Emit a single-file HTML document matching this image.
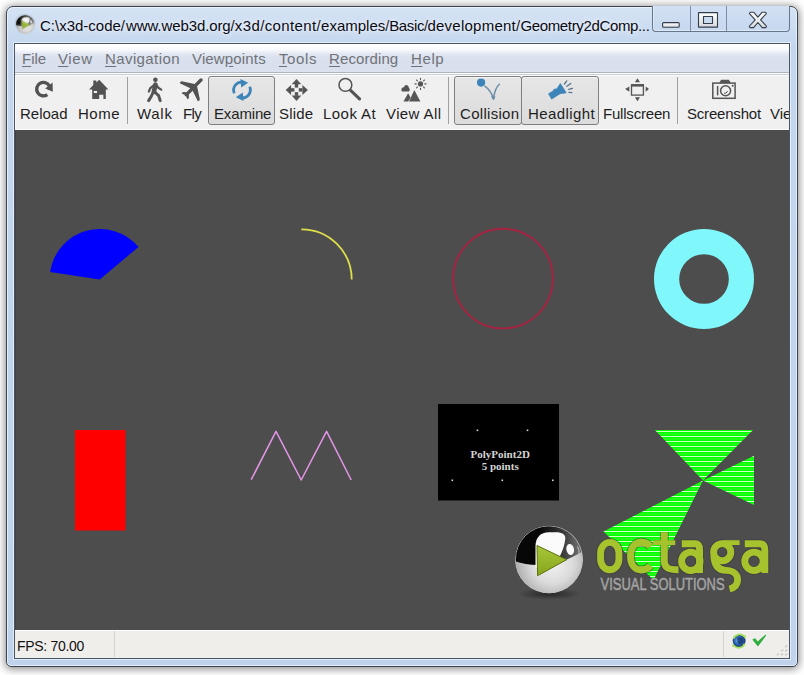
<!DOCTYPE html>
<html><head><meta charset="utf-8">
<style>
html,body{margin:0;padding:0;width:804px;height:675px;overflow:hidden;background:#fff;font-family:"Liberation Sans",sans-serif;}
.abs{position:absolute;}
#win{position:absolute;left:6px;top:6px;width:790px;height:659px;border:1px solid #3c4450;border-radius:7px 7px 5px 5px;
 background:linear-gradient(#d5e3f4 0px,#c8daf0 30px,#c3d6ee 40px,#bfd3ed 100%);
 box-shadow:0 1px 9px 1px rgba(0,0,0,0.48), inset 0 0 0 1px rgba(255,255,255,0.55);}
#client{position:absolute;left:14px;top:43px;width:774px;height:614px;border:1px solid #4a5564;background:#f0f0f0;box-shadow:0 0 0 1px rgba(255,255,255,0.55);}
#title{position:absolute;left:40px;top:17px;font-size:15px;color:#0a0a14;white-space:nowrap;text-shadow:0 0 7px rgba(255,255,255,0.9),0 0 3px rgba(255,255,255,0.6);}
#menubar{position:absolute;left:15px;top:44px;width:774px;height:28px;background:linear-gradient(#ffffff 0px,#f8f9fc 6px,#e6eaf3 9px,#dbe1ee 13px,#d8dfed 24px,#dde2ee 28px);}
#menusep{position:absolute;left:15px;top:72px;width:774px;height:4px;background:linear-gradient(#aeb4bd 0 1px,#fff 1px 2px,#c9ccd1 2px 3px,#fbfbfb 3px 4px);}
.mi{position:absolute;top:50px;font-size:15px;color:#6f7378;white-space:nowrap;}
.mi u{text-decoration:underline;text-underline-offset:2px;}
#toolbar{position:absolute;left:15px;top:76px;width:774px;height:54px;background:#f0f0f0;box-shadow:inset 1px 0 0 #fbfbfb, inset 0 -1px 0 #fbfbfb;}
.tl{position:absolute;top:105px;font-size:15px;color:#1e1e1e;white-space:nowrap;}
.sep{position:absolute;top:77px;width:1px;height:47px;background:#a0a0a0;}
.btn{position:absolute;top:76px;height:47px;border:1px solid #7f7f7f;border-radius:3px;background:linear-gradient(#e6e6e6,#dcdcdc);box-shadow:inset 0 1px 0 #f4f4f4;}
#view{position:absolute;left:15px;top:130px;width:774px;height:500px;background:#4d4d4d;overflow:hidden;box-shadow:inset 1px 0 0 #434343;}
#status{position:absolute;left:15px;top:630px;width:774px;height:28px;background:#f0eeeb;border-top:1px solid #fff;box-sizing:border-box;}
.ssep{position:absolute;top:631px;width:1px;height:26px;background:#d6d2ce;}
#fps{position:absolute;left:17px;top:637.5px;font-size:14px;letter-spacing:-0.3px;color:#111;white-space:nowrap;}
</style></head>
<body>
<div id="win"></div>
<div id="client"></div>
<!-- title bar icon -->
<svg class="abs" style="left:0;top:0" width="50" height="50" viewBox="0 0 50 50">
 <defs><filter id="tib" filterUnits="userSpaceOnUse" x="0" y="0" width="50" height="50"><feGaussianBlur stdDeviation="1"/></filter></defs>
 <g transform="translate(25.3 24.6) scale(0.275)"><use href="#octsphere"/></g>
 <g filter="url(#tib)" opacity="0.6"><g transform="translate(25.3 24.6) scale(0.275)"><use href="#octsphere"/></g></g>
</svg>
<div id="title"><span style="position:absolute;left:0.0px;letter-spacing:0px">C:\x3d-code/</span><span style="position:absolute;left:86.0px;letter-spacing:-0.1px">www.web3d.org/</span><span style="position:absolute;left:194.7px;letter-spacing:0.5px">x3d/</span><span style="position:absolute;left:224.7px;letter-spacing:0.37px">content/</span><span style="position:absolute;left:281.1px;letter-spacing:0px">examples/</span><span style="position:absolute;left:349.2px;letter-spacing:-0.35px">Basic/</span><span style="position:absolute;left:387.4px;letter-spacing:0.25px">development/</span><span style="position:absolute;left:480.4px;letter-spacing:-0.35px">Geometry2dComp...</span></div>
<!-- caption buttons -->
<div class="abs" style="left:652px;top:6px;width:136px;height:25px;border:1px solid #66768c;border-top:none;border-radius:0 0 4px 4px;background:linear-gradient(#d2e0f3,#c6d8ef);box-shadow:inset 0 -1px 0 rgba(255,255,255,0.45), inset 1px 0 0 rgba(255,255,255,0.35);"></div>
<div class="abs" style="left:690px;top:6px;width:1px;height:25px;background:#7d8ca2;"></div>
<div class="abs" style="left:726px;top:6px;width:1px;height:25px;background:#7d8ca2;"></div>
<svg class="abs" style="left:640px;top:0" width="164" height="40" viewBox="640 0 164 40">
 <defs><linearGradient id="glyph" x1="0" y1="0" x2="0" y2="1"><stop offset="0" stop-color="#ffffff"/><stop offset="1" stop-color="#d6d9de"/></linearGradient></defs>
 <rect x="662.6" y="22.6" width="16.6" height="4.6" rx="1" fill="url(#glyph)" stroke="#343c48" stroke-width="1.1"/>
 <path d="M698.5 12.6 H717.5 V27.1 H698.5 Z M703.5 16.5 V23.5 H712.5 V16.5 Z" fill="url(#glyph)" fill-rule="evenodd" stroke="#343c48" stroke-width="1.1" stroke-linejoin="round"/>
 <path d="M750.5 12.2 L753.6 12.2 L757.9 17.2 L762.2 12.2 L765.3 12.2 Q766.6 12.8 766.1 13.9 L760.6 19.8 L766.3 26 Q766.7 27.2 765.4 27.6 L762.2 27.6 L757.9 22.5 L753.6 27.6 L750.4 27.6 Q749.1 27.2 749.5 26 L755.2 19.8 L749.7 13.9 Q749.2 12.8 750.5 12.2 Z" fill="url(#glyph)" stroke="#343c48" stroke-width="1.1" stroke-linejoin="round"/>
</svg>
<div id="menubar"></div>
<div id="menusep"></div>
<div class="mi" style="left:22px"><u>F</u>ile</div>
<div class="mi" style="left:58px;letter-spacing:0.6px"><u>V</u>iew</div>
<div class="mi" style="left:105px;letter-spacing:0.4px"><u>N</u>avigation</div>
<div class="mi" style="left:192px;letter-spacing:0.15px">View<u>p</u>oints</div>
<div class="mi" style="left:279px;letter-spacing:0.6px"><u>T</u>ools</div>
<div class="mi" style="left:329px;letter-spacing:0.1px"><u>R</u>ecording</div>
<div class="mi" style="left:411px;letter-spacing:0.6px"><u>H</u>elp</div>

<div id="toolbar"></div>
<div class="sep" style="left:127px"></div>
<div class="sep" style="left:448px"></div>
<div class="sep" style="left:677px"></div>
<div class="btn" style="left:208px;width:65px"></div>
<div class="btn" style="left:454px;width:66px"></div>
<div class="btn" style="left:521px;width:76px"></div>

<div class="tl" style="left:20px">Reload</div>
<div class="tl" style="left:78px;letter-spacing:0.5px">Home</div>
<div class="tl" style="left:137px;letter-spacing:0.7px">Walk</div>
<div class="tl" style="left:183px;letter-spacing:-0.6px">Fly</div>
<div class="tl" style="left:214px;letter-spacing:-0.15px">Examine</div>
<div class="tl" style="left:279px;letter-spacing:0.2px">Slide</div>
<div class="tl" style="left:323px;letter-spacing:0.45px">Look At</div>
<div class="tl" style="left:386px;letter-spacing:0.4px">View All</div>
<div class="tl" style="left:460px;letter-spacing:0.3px">Collision</div>
<div class="tl" style="left:528px;letter-spacing:0.4px">Headlight</div>
<div class="tl" style="left:603px;letter-spacing:-0.2px">Fullscreen</div>
<div class="tl" style="left:687px;letter-spacing:-0.2px">Screenshot</div>
<div class="abs" style="left:15px;top:74px;width:774px;height:56px;overflow:hidden;pointer-events:none">
 <div class="tl" style="left:755px;top:31px">Viewpoints</div>
</div>

<svg class="abs" style="left:0;top:0" width="804" height="135" viewBox="0 0 804 135">
 <g fill="#555" stroke="none">
  <!-- Reload -->
  <path d="M47.3 94.7 A6.75 6.75 0 1 1 49.3 85.8" fill="none" stroke="#525252" stroke-width="3.4"/>
  <path d="M45.2 88.4 L52.6 82.4 L52.8 91.8 Z" fill="#525252"/>
  <!-- Home -->
  <path d="M99.2 79.8 L108.4 89.6 L105.8 89.6 L105.8 99.1 L103.4 99.1 L103.4 94.8 L99.2 94.8 L99.2 99.1 L92.2 99.1 L92.2 89.6 L89 89.6 L93.3 85 L93.3 80.4 L96.3 80.4 L96.3 82.5 Z" fill="#525252"/>
  <rect x="93.8" y="91" width="3.2" height="2" fill="#f4f4f4"/>
  <!-- Walk -->
  <g fill="none" stroke="#545454" stroke-linecap="round" stroke-linejoin="round">
   <circle cx="155.4" cy="79.8" r="2.3" fill="#545454" stroke="none"/>
   <path d="M155.4 84.6 L153.9 91.8" stroke-width="4.6"/>
   <path d="M154 85.2 L150.3 88.2 L148.8 91.5" stroke-width="2.2"/>
   <path d="M156.5 85.2 L158.6 88 L161.3 89.6" stroke-width="2.2"/>
   <path d="M153.2 92 L151.2 96.5 L148.6 100.6" stroke-width="3"/>
   <path d="M154.8 92 L158.6 95.6 L160.2 100.6" stroke-width="3"/>
  </g>
  <!-- Fly -->
  <path transform="translate(193.6 87.4) rotate(-45)" d="M12.2 0 C12.2 -1.1 11.4 -1.7 10.4 -1.7 L3.2 -1.7 L-4 -12.8 C-4.6 -13.4 -6.2 -13.4 -6.8 -12.6 L-3 -1.7 L-8.4 -1.7 L-10.8 -4.2 L-12.8 -4.2 L-11.6 -1.2 L-12.2 0 L-11.6 1.2 L-12.8 4.2 L-10.8 4.2 L-8.4 1.7 L-3 1.7 L-6.8 12.6 C-6.2 13.4 -4.6 13.4 -4 12.8 L3.2 1.7 L10.4 1.7 C11.4 1.7 12.2 1.1 12.2 0 Z" fill="#525252"/>
  <!-- Examine refresh -->
  <g fill="#3d84b8" stroke="none">
   <path d="M234.3 93.2 A8 8 0 0 1 243.5 82.3" fill="none" stroke="#3d84b8" stroke-width="2.8"/>
   <path d="M240.4 79 L248.2 82.8 L241.2 87.6 Z"/>
   <path d="M249.7 86.8 A8 8 0 0 1 240.5 97.7" fill="none" stroke="#3d84b8" stroke-width="2.8"/>
   <path d="M243.6 101 L235.8 97.2 L242.8 92.4 Z"/>
  </g>
  <!-- Slide move -->
  <g fill="#555">
   <path d="M296.5 78.9 L301.3 84.3 L291.7 84.3 Z"/>
   <path d="M296.5 100.9 L301.3 95.6 L291.7 95.6 Z"/>
   <path d="M285.7 89.9 L291.1 85 L291.1 94.9 Z"/>
   <path d="M307.9 89.9 L302.4 85 L302.4 94.9 Z"/>
   <rect x="294.8" y="84" width="3.4" height="3.6"/>
   <rect x="294.8" y="92.2" width="3.4" height="3.6"/>
   <rect x="290.8" y="88.2" width="3.6" height="3.4"/>
   <rect x="298.8" y="88.2" width="3.6" height="3.4"/>
  </g>
  <!-- Look At -->
  <circle cx="345.4" cy="84.9" r="6.4" fill="none" stroke="#555" stroke-width="1.5"/>
  <path d="M350.6 90.4 L359.5 98.8" fill="none" stroke="#555" stroke-width="3.2" stroke-linecap="round"/>
  <!-- View All -->
  <g fill="#555">
   <circle cx="420.5" cy="83.9" r="2.6"/>
   <g stroke="#555" stroke-width="1.1" stroke-linecap="round">
    <path d="M420.5 78.4 L420.5 79.6 M420.5 88.2 L420.5 89.4 M415 83.9 L416.2 83.9 M424.8 83.9 L426 83.9 M416.6 80 L417.4 80.8 M423.6 87 L424.4 87.8 M424.4 80 L423.6 80.8 M417.4 87 L416.6 87.8"/>
   </g>
   <path d="M401.4 90.2 C401.2 88 402.6 87 404 87.2 C404.4 85.4 405.8 84.8 407 85.2 C408.5 85.6 409 87 408.8 88 C409.8 88.4 410 89.6 409.6 90.6 C409.4 91.4 408.8 91.6 408 91.6 L403 91.6 C402 91.6 401.4 91 401.4 90.2 Z"/>
   <path d="M403.5 101.5 L408.1 93.2 L410.6 97.5 L408.2 101.5 Z"/>
   <path d="M409 101.5 L414.3 89.9 L420.4 101.5 Z"/>
  </g>
  <!-- Collision -->
  <circle cx="481.1" cy="82.6" r="4.1" fill="#3d84b8"/>
  <path d="M484.5 85.8 C488.5 88.5 492 93 493.5 99.2 C494.2 92 496 87 499.8 83.7" fill="none" stroke="#6f8ea6" stroke-width="1.5"/>
  <path d="M491.6 96.6 L493.6 99.6 L494.8 96.2" fill="none" stroke="#5c86a6" stroke-width="1"/>
  <!-- Headlight -->
  <g transform="translate(549.8 96.6) rotate(-32)" fill="#3d84b8">
   <path d="M0 -3.3 L6 -3.3 L6.8 -4.1 L8.8 -4.1 L9.5 -3.3 L10.2 -3.3 L15.8 -5.8 L16.2 -5 L16.2 5 L15.8 5.8 L10.2 3.3 L0 3.3 Z"/>
  </g>
  <g stroke="#55748e" stroke-width="1.3" fill="none" stroke-linecap="round">
   <path d="M564.4 84 L566.8 80.9 M566.8 86.2 L570.8 83.5 M568.7 89.4 L572.4 88.4 M568.9 92.4 L571.8 92.6"/>
  </g>
  <!-- Fullscreen -->
  <g fill="#555">
   <rect x="631.5" y="84.8" width="11.9" height="10.3" fill="none" stroke="#555" stroke-width="1.3"/>
   <rect x="631" y="84.2" width="13" height="2.4"/>
   <path d="M637.4 78.3 L640 82.2 L634.9 82.2 Z"/>
   <path d="M637.4 101.3 L640 97.3 L634.9 97.3 Z"/>
   <path d="M625.1 89.1 L629.3 86.5 L629.3 91.8 Z"/>
   <path d="M649 89.1 L645.7 86.5 L645.7 91.8 Z"/>
  </g>
  <!-- Screenshot -->
  <g fill="none" stroke="#555" stroke-width="1.5">
   <rect x="712.8" y="83.1" width="22.3" height="15.2"/>
   <path d="M720 83 L721.6 80.5 L728.4 80.5 L730 83" stroke-width="1.6" fill="#555"/>
   <circle cx="725.6" cy="90.7" r="5"/>
   <path d="M717.6 86 L717.6 95.4" stroke-width="1.5"/>
   <path d="M724.2 93.2 L726 93.2 L727.6 91" stroke-width="1"/>
  </g>
  <circle cx="732.7" cy="85.8" r="1" fill="#555"/>
 </g>
</svg>
<div id="view"></div>
<svg class="abs" style="left:0;top:0" width="804" height="675" viewBox="0 0 804 675">
 <defs>
  <clipPath id="vc"><rect x="15" y="130" width="774" height="500"/></clipPath>
  <pattern id="stripe" x="0" y="431" width="8" height="5" patternUnits="userSpaceOnUse">
   <rect x="0" y="0" width="8" height="5" fill="#00ff00"/>
   <rect x="0" y="0" width="8" height="1" fill="#d2ffc8"/>
   <rect x="0" y="2.5" width="8" height="1" fill="#5cff40" opacity="0.6"/>
  </pattern>
  <radialGradient id="sphLow" cx="0.55" cy="0.55" r="0.6">
   <stop offset="0" stop-color="#f2f2f2"/><stop offset="0.5" stop-color="#dcdcdc"/><stop offset="0.85" stop-color="#b4b4b4"/><stop offset="1" stop-color="#8e8e8e"/>
  </radialGradient>
  <filter id="blur1" x="-50%" y="-50%" width="200%" height="200%"><feGaussianBlur stdDeviation="0.7"/></filter>
  <filter id="blur05" x="-20%" y="-20%" width="140%" height="140%"><feGaussianBlur stdDeviation="0.5"/></filter>
  <linearGradient id="darkg" x1="0" y1="0" x2="1" y2="0">
   <stop offset="0" stop-color="#0a0a0a"/><stop offset="0.4" stop-color="#050505"/><stop offset="0.68" stop-color="#3a3a3a"/><stop offset="0.86" stop-color="#6a6a6a"/><stop offset="1" stop-color="#484848"/>
  </linearGradient>
  <radialGradient id="sphTop" cx="0.5" cy="0.5" r="0.5">
   <stop offset="0" stop-color="#fff"/><stop offset="0.6" stop-color="#eee"/><stop offset="1" stop-color="#ddd" stop-opacity="0"/>
  </radialGradient>
  <radialGradient id="shadow" cx="0.5" cy="0.5" r="0.5">
   <stop offset="0" stop-color="#000" stop-opacity="0.5"/><stop offset="1" stop-color="#000" stop-opacity="0"/>
  </radialGradient>
  <linearGradient id="playg" x1="0" y1="0" x2="0" y2="1">
   <stop offset="0" stop-color="#a8c83a"/><stop offset="1" stop-color="#86a41c"/>
  </linearGradient>
<g id="octsphere" transform="translate(-549 -559.4)">
  <clipPath id="sphclip"><circle cx="549" cy="559.4" r="34"/></clipPath>
  <g clip-path="url(#sphclip)">
  <circle cx="549" cy="559.4" r="34" fill="url(#sphLow)"/>
  <path d="M505 557 C515 562 525 565 538 565 C548 565 556 563.5 562 561.5 C570 558.5 578 554.5 590 547 L590 520 L505 520 Z" fill="url(#darkg)"/>
  <path d="M535.5 568 L535.5 546 C535.5 537.5 540.5 532.3 549 532.3 L556 532.3 C562 532.3 565.5 534.5 565.3 538.5 C564.8 545 562.5 551 559.5 557 Z" fill="#fbfbfb" filter="url(#blur05)"/>
  <g filter="url(#blur1)"><ellipse cx="570.2" cy="549.5" rx="3.8" ry="5.6" transform="rotate(-12 570.2 549.5)" fill="#fafafa"/></g>
  <path d="M577.5 546.5 C579 549 579.5 551 579 553.5" fill="none" stroke="#e8e8e8" stroke-width="1.2" opacity="0.6"/>
  <circle cx="549" cy="559.4" r="33.6" fill="none" stroke="#bdbdbd" stroke-width="1" opacity="0.9"/>
  </g>
  <path d="M537 545.5 L537.6 575.7 L566.7 559.7 Z" fill="url(#playg)" stroke="#5f7010" stroke-width="1" stroke-linejoin="round"/>
</g>
 </defs>
 <g clip-path="url(#vc)">
  <!-- ArcClose2D pie -->
  <path d="M99.7 279.5 L50.2 272 A50.3 50.3 0 0 1 138.5 246.9 Z" fill="#0000ff"/>
  <!-- Arc2D -->
  <path d="M301.3 229.3 A50.2 50.2 0 0 1 351.7 279.5" fill="none" stroke="#dede4a" stroke-width="1.8"/>
  <!-- Circle2D -->
  <circle cx="503" cy="278.6" r="49.8" fill="none" stroke="#a82242" stroke-width="1.9"/>
  <!-- Disk2D -->
  <path d="M704 229 A50 50 0 1 1 704 329 A50 50 0 1 1 704 229 Z M704 254.2 A24.8 24.8 0 1 0 704 303.8 A24.8 24.8 0 1 0 704 254.2 Z" fill="#80f8fb" fill-rule="evenodd"/>
  <!-- Rectangle2D -->
  <rect x="75" y="430" width="50.5" height="100.5" fill="#ff0000"/>
  <!-- Polyline2D -->
  <polyline points="251.2,479.7 276,431.3 301.2,480 326.6,431.3 351.2,480" fill="none" stroke="#e496e8" stroke-width="1.5" stroke-linejoin="round"/>
  <!-- PolyPoint2D -->
  <rect x="438" y="404" width="121" height="96.5" fill="#000"/>
  <g fill="#d8d8d8">
   <rect x="476.6" y="429.5" width="1.6" height="1.6"/><rect x="526.7" y="429.5" width="1.6" height="1.6"/>
   <rect x="451.5" y="479.5" width="1.6" height="1.6"/><rect x="501.5" y="479.5" width="1.6" height="1.6"/><rect x="552" y="479.5" width="1.6" height="1.6"/>
  </g>
  <text x="500.2" y="457.5" text-anchor="middle" font-family="Liberation Serif" font-weight="bold" font-size="11" fill="#d4d4d4">PolyPoint2D</text>
  <text x="500.2" y="469.6" text-anchor="middle" font-family="Liberation Serif" font-weight="bold" font-size="11" fill="#d4d4d4">5 points</text>
  <!-- TriangleSet2D -->
  <path d="M654.9 430 L753 430 L703 480.5 Z M703 480.5 L754 455.8 L754 505 Z M703 480.5 L603.5 531.5 L653.5 580 Z" fill="url(#stripe)"/>
  <!-- Octaga logo -->
  <ellipse cx="549" cy="594" rx="32" ry="6" fill="url(#shadow)"/>
  <use href="#octsphere" transform="translate(549 559.4)"/>
  <g id="letters" fill="none" stroke-linecap="butt">
   <rect x="600.6" y="542.4" width="18.3" height="27.4" rx="9.15" ry="10.5"/>
   <path d="M650.5 546.5 C648 543.6 645 542.3 641.5 542.3 C635 542.3 630.5 547.5 630.5 556.2 C630.5 565 635 570 641.5 570 C645 570 648 568.6 650.5 565.8"/>
   <path d="M664.3 532.3 L664.3 561 C664.3 567.5 668 569.8 678.5 569.8"/>
   <path d="M653 542.7 L675.3 542.7" stroke-width="4.8"/>
   <path d="M681.8 543.8 L695 543.8 C698.5 543.8 699.6 546 699.6 550 L699.6 573"/>
   <circle cx="690.8" cy="561.3" r="9.2"/>
   <circle cx="722.2" cy="552.2" r="8.6"/>
   <path d="M723 542.6 L739.6 542.6" stroke-width="4.8"/>
   <path d="M713.8 556 C714.5 565.5 718.5 570.4 726 570.4 C733.5 570.4 737.6 574.5 737.6 579.8 C737.6 584.8 734.5 587.8 729.5 589"/>
   <path d="M744.8 543.8 L759.5 543.8 C763.5 543.8 764.8 546 764.8 550 L764.8 573"/>
   <circle cx="754" cy="561.3" r="9.2"/>
  </g>
  <use href="#letters" stroke="#383838" stroke-width="8.9" opacity="0.5"/>
  <use href="#letters" stroke="#a6c22c" stroke-width="6.9"/>
  <text x="600.6" y="589.6" font-family="Liberation Sans" font-size="15.6" fill="#a4a4a4" stroke="#a4a4a4" stroke-width="0.45" textLength="124" lengthAdjust="spacingAndGlyphs">VISUAL SOLUTIONS</text>
 </g>
</svg>

<div id="status"></div>
<div class="ssep" style="left:114px"></div>
<div class="ssep" style="left:723px"></div>
<div id="fps">FPS: 70.00</div>
<svg class="abs" style="left:720px;top:628px" width="75" height="35" viewBox="720 628 75 35">
 <defs><radialGradient id="globeg" cx="0.45" cy="0.45" r="0.6"><stop offset="0" stop-color="#7cc0f0"/><stop offset="0.5" stop-color="#2e6ab8"/><stop offset="1" stop-color="#0a1c50"/></radialGradient></defs>
 <circle cx="739.1" cy="641.1" r="6.4" fill="url(#globeg)"/>
 <path d="M737 638 C739 636.5 741.5 637 742.5 639 C743.5 641 742 643.5 740 644 C738.5 644.3 737 643 737.5 641.5 Z" fill="#0b2460" opacity="0.7"/>
 <path d="M733.4 638.6 A6.6 6.6 0 0 1 744.4 636.6" fill="none" stroke="#a8e060" stroke-width="1.8"/><path d="M742.6 635.2 L746.2 635.4 L745.4 639 Z" fill="#a8e060"/>
 <path d="M744.8 643.6 A6.6 6.6 0 0 1 733.8 645.6" fill="none" stroke="#a8e060" stroke-width="1.8"/><path d="M735.6 647 L732 646.8 L732.8 643.2 Z" fill="#a8e060"/>
 <path d="M752.3 639.6 L755.2 638.2 L757.7 641.6 L765.6 634.4 L766.2 635.6 L757.9 646.6 Z" fill="#2fae3c"/>
 <g fill="#b4b0ac">
  <rect x="785.5" y="645.5" width="2" height="2"/>
  <rect x="781.5" y="649.7" width="2" height="2"/><rect x="785.5" y="649.7" width="2" height="2"/>
  <rect x="777.3" y="653.8" width="2" height="2"/><rect x="781.5" y="653.8" width="2" height="2"/><rect x="785.5" y="653.8" width="2" height="2"/>
 </g>
 <g fill="#ffffff">
  <rect x="786.3" y="646.3" width="1.4" height="1.4"/>
  <rect x="782.3" y="650.5" width="1.4" height="1.4"/><rect x="786.3" y="650.5" width="1.4" height="1.4"/>
  <rect x="778.1" y="654.6" width="1.4" height="1.4"/><rect x="782.3" y="654.6" width="1.4" height="1.4"/><rect x="786.3" y="654.6" width="1.4" height="1.4"/>
 </g>
</svg>

</body></html>
